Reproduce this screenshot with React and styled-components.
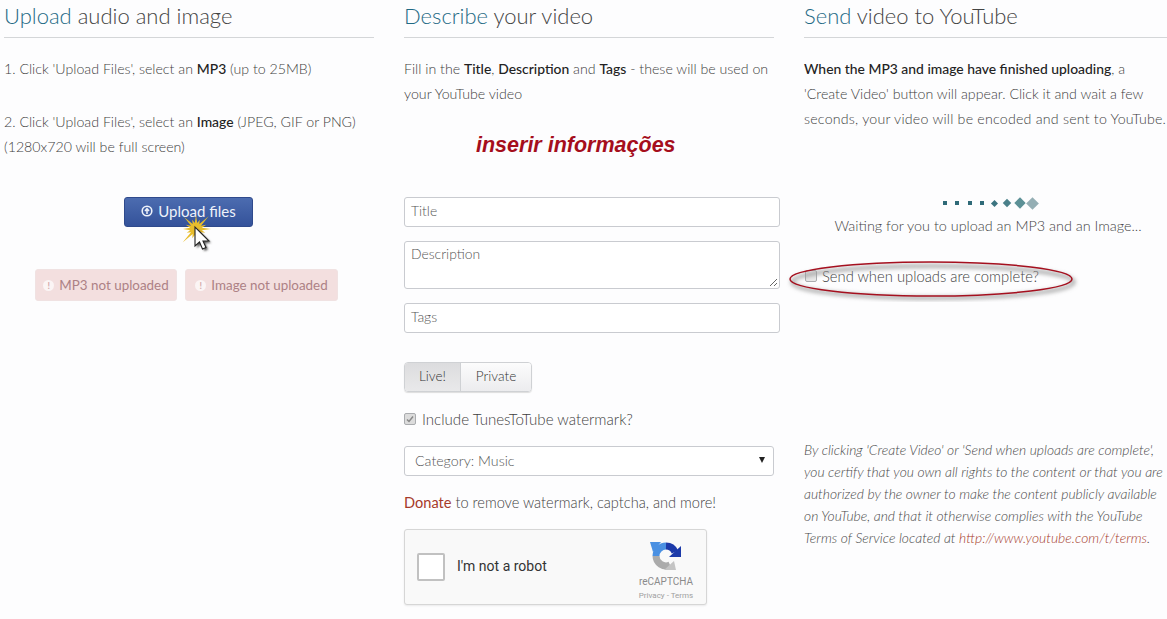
import React from 'react';
import styled, { createGlobalStyle } from 'styled-components';

const Global = createGlobalStyle`
  html, body { margin: 0; padding: 0; background: #fdfdfe; overflow: hidden; }
  body { font-family: Lato, "Open Sans", sans-serif; font-weight: 300; color: #444; }
  * { box-sizing: border-box; }
`;

const Page = styled.div`
  width: 1167px;
  height: 619px;
  padding-left: 4px;
  display: grid;
  grid-template-columns: 370px 370px 364px;
  column-gap: 30px;
  overflow: hidden;
  position: relative;
`;

const Column = styled.section`
  display: flex;
  flex-direction: column;
  position: relative;
`;

const Heading = styled.h2`
  margin: 0;
  height: 38px;
  padding-top: 2px;
  border-bottom: 1px solid #d4d6d8;
  font-size: 22px;
  line-height: 28px;
  font-weight: 300;
  color: #444;
  span { color: #1f6a85; }
`;

const Para = styled.p`
  margin: ${p => p.$top || 0}px 0 0;
  font-size: ${p => p.$size || 14.2}px;
  line-height: 25px;
  color: #3f3f3f;
  white-space: nowrap;
  b { font-weight: 500; font-size: 13.9px; color: #222; }
  a { color: #a63a2a; font-weight: 400; }
  span { letter-spacing: .22px; }
`;

const UploadButton = styled.button`
  align-self: center;
  width: 129px;
  height: 30px;
  margin: 38px 0 0 -1px;
  border: 1px solid #2f4a8c;
  border-radius: 3px;
  background: linear-gradient(#4c6cb0, #34529a);
  color: #eef2fa;
  font: 400 15px Lato, sans-serif;
  display: flex;
  align-items: center;
  justify-content: center;
  gap: 5px;
  padding: 0 0 2px;
`;

const AlertRow = styled.div`
  display: flex;
  justify-content: flex-start;
  gap: 8px;
  margin: 42px 0 0 31px;
`;

const Alert = styled.div`
  height: 32px;
  width: ${p => p.$w}px;
  background: #f3dfdf;
  border: 1px solid #f0e2e2;
  border-radius: 3px;
  display: flex;
  align-items: center;
  justify-content: center;
  gap: 5px;
  color: #ad8185;
  font-size: 13.4px;
  font-weight: 400;
`;

const AlertDot = styled.span`
  width: 11px;
  height: 11px;
  border-radius: 50%;
  background: #fbf5f5;
  color: #d3a9aa;
  font-size: 9px;
  line-height: 11px;
  text-align: center;
  font-weight: 700;
`;

const Callout = styled.div`
  margin: 25px 0 0 72px;
  height: 28px;
  font: italic 700 21.5px/28px "Liberation Sans", Arial, sans-serif;
  color: #a50e1c;
`;

const Field = styled.div`
  width: 376px;
  height: ${p => p.$h || 30}px;
  margin-top: ${p => p.$top}px;
  padding: ${p => (p.$h ? '4px' : '0')} 6px 0;
  border: 1px solid #c9cbd0;
  border-radius: 3px;
  background: #fff;
  color: #555;
  font-size: 13.9px;
  line-height: ${p => (p.$h ? '16px' : '26px')};
  position: relative;
`;

const Resize = styled.svg`
  position: absolute;
  right: 1px;
  bottom: 1px;
`;

const Toggle = styled.div`
  display: flex;
  width: 128px;
  height: 30px;
  margin-top: 29px;
  border: 1px solid #cfd1d4;
  border-radius: 4px;
  overflow: hidden;
  box-shadow: 0 1px 1px #ddd;
`;

const ToggleItem = styled.div`
  flex: ${p => (p.$on ? '0 0 56px' : 1)};
  display: flex;
  align-items: center;
  justify-content: center;
  padding-bottom: 2px;
  font-size: 13.6px;
  font-weight: 300;
  color: #333;
  background: ${p => (p.$on ? 'linear-gradient(#dcdcde, #e9e9ea)' : 'linear-gradient(#fcfcfc, #ececee)')};
  border-right: ${p => (p.$on ? '1px solid #cfd1d4' : '0')};
`;

const CheckRow = styled.label`
  display: flex;
  align-items: center;
  gap: ${p => p.$gap || 6}px;
  font-size: ${p => p.$size || 14.9}px;
  color: #3f3f3f;
  height: 20px;
  margin-top: ${p => p.$top}px;
  margin-left: ${p => p.$left || 0}px;
`;

const Box = styled.span`
  width: 12px;
  height: 12px;
  border: 1px solid #aaacaf;
  border-radius: 2px;
  background: ${p => (p.$on ? '#dcdcdc' : '#e8e8e8')};
  display: flex;
  align-items: center;
  justify-content: center;
`;

const Select = styled.div`
  width: 370px;
  height: 30px;
  margin-top: 17px;
  padding: 0 8px 2px 10px;
  border: 1px solid #c9cbd0;
  border-radius: 3px;
  background: #fff;
  display: flex;
  align-items: center;
  justify-content: space-between;
  font-size: 14.2px;
  color: #555;
`;

const Arrow = styled.span`
  width: 0;
  height: 0;
  border-left: 3.5px solid transparent;
  border-right: 3.5px solid transparent;
  border-top: 6px solid #222;
`;

const Captcha = styled.div`
  width: 303px;
  height: 76px;
  margin-top: 14px;
  background: #f9f9f9;
  border: 1px solid #d6d6d6;
  border-radius: 3px;
  box-shadow: 0 1px 2px rgba(0,0,0,.08);
  display: flex;
  align-items: center;
  padding: 0 10px 0 12px;
`;

const CaptchaBox = styled.span`
  width: 28px;
  height: 28px;
  background: #fff;
  border: 2px solid #c1c1c1;
  border-radius: 2px;
  margin-right: 12px;
`;

const CaptchaLabel = styled.span`
  flex: 1;
  padding-bottom: 2px;
  font: 400 14px Roboto, sans-serif;
  color: #333;
`;

const CaptchaLogo = styled.div`
  width: 60px;
  margin-top: 11px;
  display: flex;
  flex-direction: column;
  align-items: center;
  color: #8b8b8b;
  font: 400 10px/12px Roboto, sans-serif;
  svg { margin-bottom: 5px; }
  small { font-size: 8px; line-height: 16px; color: #a0a0a0; white-space: nowrap; }
`;

const Loader = styled.div`
  display: grid;
  grid-auto-flow: column;
  grid-auto-columns: 12.5px;
  place-items: center;
  justify-content: center;
  margin-top: 66px;
  height: 12px;
  padding-left: 5px;
`;

const Diamond = styled.i`
  display: block;
  width: ${p => p.$s}px;
  height: ${p => p.$s}px;
  background: ${p => p.$c};
  transform: rotate(${p => p.$r}deg);
`;

const Waiting = styled.div`
  margin-top: 6px;
  text-align: center;
  font-size: 14.4px;
  line-height: 22px;
  color: #444;
  padding-left: 4px;
  white-space: nowrap;
`;

const Legal = styled.p`
  margin: 153px 0 0;
  font-size: 13.9px;
  line-height: 22px;
  font-style: italic;
  color: #4a4a4a;
  white-space: nowrap;
  a { color: #a63a2a; }
`;

const Ellipse = styled.svg`
  position: absolute;
  left: -18px;
  top: 258px;
  pointer-events: none;
`;

const Pointer = styled.svg`
  position: absolute;
  left: 177px;
  top: 209px;
  pointer-events: none;
`;

const loader = [
  [4, '#2f6a78', 0], [4, '#2f6a78', 0], [4, '#2f6a78', 0], [4, '#2f6a78', 0],
  [5, '#3b7480', 45], [6, '#4a808a', 45], [8, '#5c9096', 45], [9, '#94aeb4', 45],
];

// the click flash behind the cursor: long thin spikes around one centre
const rays = [15, 10, 18, 11, 14, 10, 19, 10, 13, 11, 17, 10, 14, 10, 18, 11];
const flash = rays
  .flatMap((r, i) => {
    const a = (i / rays.length) * Math.PI * 2;
    const b = ((i + 0.5) / rays.length) * Math.PI * 2;
    return [
      `${(15 + Math.cos(a) * r).toFixed(1)},${(20 + Math.sin(a) * r).toFixed(1)}`,
      `${(15 + Math.cos(b) * 6).toFixed(1)},${(20 + Math.sin(b) * 6).toFixed(1)}`,
    ];
  })
  .join(' ');

export default function App() {
  return (
    <Page>
      <Global />
      <Column>
        <Heading><span>Upload</span> audio and image</Heading>
        <Para $top={18}>1. Click 'Upload Files', select an <b>MP3</b> (up to 25MB)</Para>
        <Para $top={28}>
          2. Click 'Upload Files', select an <b>Image</b> (JPEG, GIF or PNG)<br />
          (1280x720 will be full screen)
        </Para>
        <UploadButton>
          <svg width="12" height="12" viewBox="0 0 12 12">
            <circle cx="6" cy="6" r="4.8" fill="none" stroke="#eef2fa" strokeWidth="1.6" />
            <path d="M6 9V4M4 6l2-2.4L8 6" fill="none" stroke="#eef2fa" strokeWidth="1.5" />
          </svg>
          Upload files
        </UploadButton>
        <AlertRow>
          <Alert $w={142}><AlertDot>!</AlertDot>MP3 not uploaded</Alert>
          <Alert $w={153}><AlertDot>!</AlertDot>Image not uploaded</Alert>
        </AlertRow>
        <Pointer width="40" height="50" viewBox="0 0 40 50">
          <defs>
            <filter id="soft"><feGaussianBlur stdDeviation="1.2" /></filter>
          </defs>
          <polygon points={flash} fill="#e8bd2c" />
          <path d="M14 18v19l4.500-4 3 7 3.500-1.500-3-6.500h6z" fill="#555" filter="url(#soft)" transform="translate(2 2)" />
          <path d="M14 18v19l4.500-4 3 7 3.500-1.500-3-6.500h6z" fill="#fff" stroke="#222" strokeWidth="1.100" />
        </Pointer>
      </Column>

      <Column>
        <Heading><span>Describe</span> your video</Heading>
        <Para $top={18}>
          Fill in the <b>Title</b>, <b>Description</b> and <b>Tags</b> - these will be used on<br />
          your YouTube video
        </Para>
        <Callout>inserir informações</Callout>
        <Field $top={38}>Title</Field>
        <Field $top={14} $h={48}>
          Description
          <Resize width="9" height="9" viewBox="0 0 9 9">
            <path d="M1 8l7-7M5 8l3-3" stroke="#666" strokeWidth="1" />
          </Resize>
        </Field>
        <Field $top={14}>Tags</Field>
        <Toggle>
          <ToggleItem $on>Live!</ToggleItem>
          <ToggleItem>Private</ToggleItem>
        </Toggle>
        <CheckRow $top={17} $size={15.1}>
          <Box $on>
            <svg width="8" height="8" viewBox="0 0 8 8">
              <path d="M1 4.500l2 2L7 1.500" fill="none" stroke="#888" strokeWidth="1.500" />
            </svg>
          </Box>
          Include TunesToTube watermark?
        </CheckRow>
        <Select>Category: Music<Arrow /></Select>
        <Para $top={14} $size={14.6}><a>Donate</a> to remove watermark, captcha, and more!</Para>
        <Captcha>
          <CaptchaBox />
          <CaptchaLabel>I'm not a robot</CaptchaLabel>
          <CaptchaLogo>
            <svg width="32" height="30" viewBox="0 0 32 30">
              <path d="M6 15A10 10 0 0 1 16 5" fill="none" stroke="#4a90e2" strokeWidth="7" />
              <polygon points="0,1 11,1 3,11" fill="#4a90e2" />
              <path d="M16 5A10 10 0 0 1 25 11" fill="none" stroke="#1c3aa9" strokeWidth="7" />
              <polygon points="31,5 31,16 19,16" fill="#1c3aa9" />
              <path d="M6 15A10 10 0 0 0 20 24" fill="none" stroke="#ababab" strokeWidth="7" />
              <polygon points="14,29 26,29 24,20" fill="#c4c4c4" />
            </svg>
            reCAPTCHA
            <small>Privacy - Terms</small>
          </CaptchaLogo>
        </Captcha>
      </Column>

      <Column>
        <Heading><span>Send</span> video to YouTube</Heading>
        <Para $top={18}>
          <b>When the MP3 and image have finished uploading</b>, a<br />
          'Create Video' button will appear. Click it and wait a few<br />
          <span>seconds, your video will be encoded and sent to YouTube.</span>
        </Para>
        <Loader>
          {loader.map(([s, c, r], i) => <Diamond key={i} $s={s} $c={c} $r={r} />)}
        </Loader>
        <Waiting>Waiting for you to upload an MP3 and an Image...</Waiting>
        <CheckRow $top={29} $left={1} $gap={5} $size={14.8}><Box />Send when uploads are complete?</CheckRow>
        <Legal>
          By clicking 'Create Video' or 'Send when uploads are complete',<br />
          you certify that you own all rights to the content or that you are<br />
          authorized by the owner to make the content publicly available<br />
          on YouTube, and that it otherwise complies with the YouTube<br />
          Terms of Service located at <a>http://www.youtube.com/t/terms</a>.
        </Legal>
        <Ellipse width="295" height="44" viewBox="0 0 295 44">
          <defs>
            <filter id="shade"><feGaussianBlur stdDeviation="2" /></filter>
          </defs>
          <ellipse cx="147" cy="24" rx="141" ry="16" fill="none" stroke="#999" strokeWidth="3" filter="url(#shade)" />
          <ellipse cx="145" cy="21" rx="141" ry="17" fill="none" stroke="#a5101f" strokeWidth="1.500" />
        </Ellipse>
      </Column>
    </Page>
  );
}
